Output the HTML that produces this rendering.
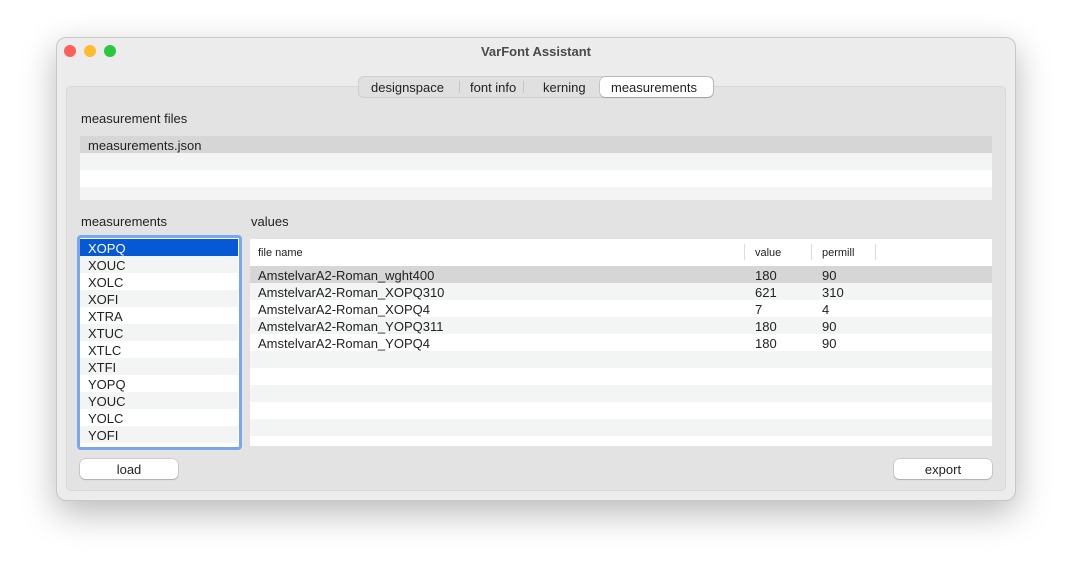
<!DOCTYPE html><html><head><style>
*{margin:0;padding:0;box-sizing:border-box}
body{width:1072px;height:576px;background:#fff;font-family:"Liberation Sans",sans-serif;font-size:13px;color:#222;position:relative;overflow:hidden}
.a{position:absolute}
.win{left:56px;top:37px;width:960px;height:464px;background:#ececec;border-radius:10px;border:1px solid #c8c8c8;box-shadow:0 12px 35px rgba(0,0,0,.28)}
.r{position:absolute;height:17px;line-height:19px;white-space:nowrap;overflow:visible}
.g{background:#f3f4f4}.w{background:#fff}
.btn{background:#fff;border-radius:5px;box-shadow:0 0 0 .5px rgba(0,0,0,.2),0 1px 1px rgba(0,0,0,.15);text-align:center;line-height:21px;height:20px}
</style></head><body>
<div class="a win"></div>
<div class="a" style="left:64px;top:45px;width:12px;height:12px;border-radius:6px;background:#fe5f57"></div>
<div class="a" style="left:84px;top:45px;width:12px;height:12px;border-radius:6px;background:#febc2e"></div>
<div class="a" style="left:104px;top:45px;width:12px;height:12px;border-radius:6px;background:#28c840"></div>
<div class="a" style="left:0;width:1072px;top:44px;text-align:center;font-weight:bold;color:#4a4a4a">VarFont Assistant</div>
<div class="a" style="left:66px;top:86px;width:940px;height:405px;background:#e3e3e3;border:1px solid #d8d8d8;border-radius:5px"></div>
<div class="a" style="left:358px;top:76px;width:356px;height:22px;background:#e0e0e0;border:1px solid #cfcfcf;border-radius:6px"></div>
<div class="a" style="left:600px;top:77px;width:113px;height:20px;background:#fff;border-radius:5px;box-shadow:0 0 0 .5px rgba(0,0,0,.2),0 1px 1px rgba(0,0,0,.15)"></div>
<div class="a" style="left:459px;top:81px;width:1px;height:12px;background:#c4c4c4"></div>
<div class="a" style="left:523px;top:81px;width:1px;height:12px;background:#c4c4c4"></div>
<div class="a" style="left:371px;top:80px">designspace</div>
<div class="a" style="left:470px;top:80px">font info</div>
<div class="a" style="left:543px;top:80px">kerning</div>
<div class="a" style="left:611px;top:80px">measurements</div>
<div class="a" style="left:81px;top:111px">measurement files</div>
<div class="r" style="left:80px;top:136px;width:912px;background:#d6d6d6;padding-left:8px">measurements.json</div>
<div class="r g" style="left:80px;top:153px;width:912px"></div>
<div class="r w" style="left:80px;top:170px;width:912px"></div>
<div class="r g" style="left:80px;top:187px;width:912px;height:13px"></div>
<div class="a" style="left:81px;top:214px">measurements</div>
<div class="a" style="left:251px;top:214px">values</div>
<div class="a" style="left:77px;top:235px;width:165px;height:215px;border:3px solid #7aa6ea;border-radius:4px;background:#fff"></div>
<div class="r" style="left:80px;top:239px;width:158px;background:#0559d5;color:#fff;padding-left:8px">XOPQ</div>
<div class="r g" style="left:80px;top:256px;width:158px;padding-left:8px">XOUC</div>
<div class="r w" style="left:80px;top:273px;width:158px;padding-left:8px">XOLC</div>
<div class="r g" style="left:80px;top:290px;width:158px;padding-left:8px">XOFI</div>
<div class="r w" style="left:80px;top:307px;width:158px;padding-left:8px">XTRA</div>
<div class="r g" style="left:80px;top:324px;width:158px;padding-left:8px">XTUC</div>
<div class="r w" style="left:80px;top:341px;width:158px;padding-left:8px">XTLC</div>
<div class="r g" style="left:80px;top:358px;width:158px;padding-left:8px">XTFI</div>
<div class="r w" style="left:80px;top:375px;width:158px;padding-left:8px">YOPQ</div>
<div class="r g" style="left:80px;top:392px;width:158px;padding-left:8px">YOUC</div>
<div class="r w" style="left:80px;top:409px;width:158px;padding-left:8px">YOLC</div>
<div class="r g" style="left:80px;top:426px;width:158px;padding-left:8px">YOFI</div>
<div class="a" style="left:250px;top:239px;width:742px;height:207px;background:#fff"></div>
<div class="a" style="left:258px;top:247px;font-size:11px">file name</div>
<div class="a" style="left:755px;top:247px;font-size:11px">value</div>
<div class="a" style="left:822px;top:247px;font-size:11px">permill</div>
<div class="a" style="left:744px;top:244px;width:1px;height:16px;background:#ddd"></div>
<div class="a" style="left:811px;top:244px;width:1px;height:16px;background:#ddd"></div>
<div class="a" style="left:875px;top:244px;width:1px;height:16px;background:#ddd"></div>
<div class="r" style="left:250px;top:266px;width:742px;background:#d6d6d6"></div>
<div class="r g" style="left:250px;top:283px;width:742px"></div>
<div class="r g" style="left:250px;top:317px;width:742px"></div>
<div class="r g" style="left:250px;top:351px;width:742px"></div>
<div class="r g" style="left:250px;top:385px;width:742px"></div>
<div class="r g" style="left:250px;top:419px;width:742px"></div>
<div class="r" style="left:258px;top:266px">AmstelvarA2-Roman_wght400</div><div class="r" style="left:755px;top:266px">180</div><div class="r" style="left:822px;top:266px">90</div>
<div class="r" style="left:258px;top:283px">AmstelvarA2-Roman_XOPQ310</div><div class="r" style="left:755px;top:283px">621</div><div class="r" style="left:822px;top:283px">310</div>
<div class="r" style="left:258px;top:300px">AmstelvarA2-Roman_XOPQ4</div><div class="r" style="left:755px;top:300px">7</div><div class="r" style="left:822px;top:300px">4</div>
<div class="r" style="left:258px;top:317px">AmstelvarA2-Roman_YOPQ311</div><div class="r" style="left:755px;top:317px">180</div><div class="r" style="left:822px;top:317px">90</div>
<div class="r" style="left:258px;top:334px">AmstelvarA2-Roman_YOPQ4</div><div class="r" style="left:755px;top:334px">180</div><div class="r" style="left:822px;top:334px">90</div>
<div class="a btn" style="left:80px;top:459px;width:98px">load</div>
<div class="a btn" style="left:894px;top:459px;width:98px">export</div>
</body></html>
